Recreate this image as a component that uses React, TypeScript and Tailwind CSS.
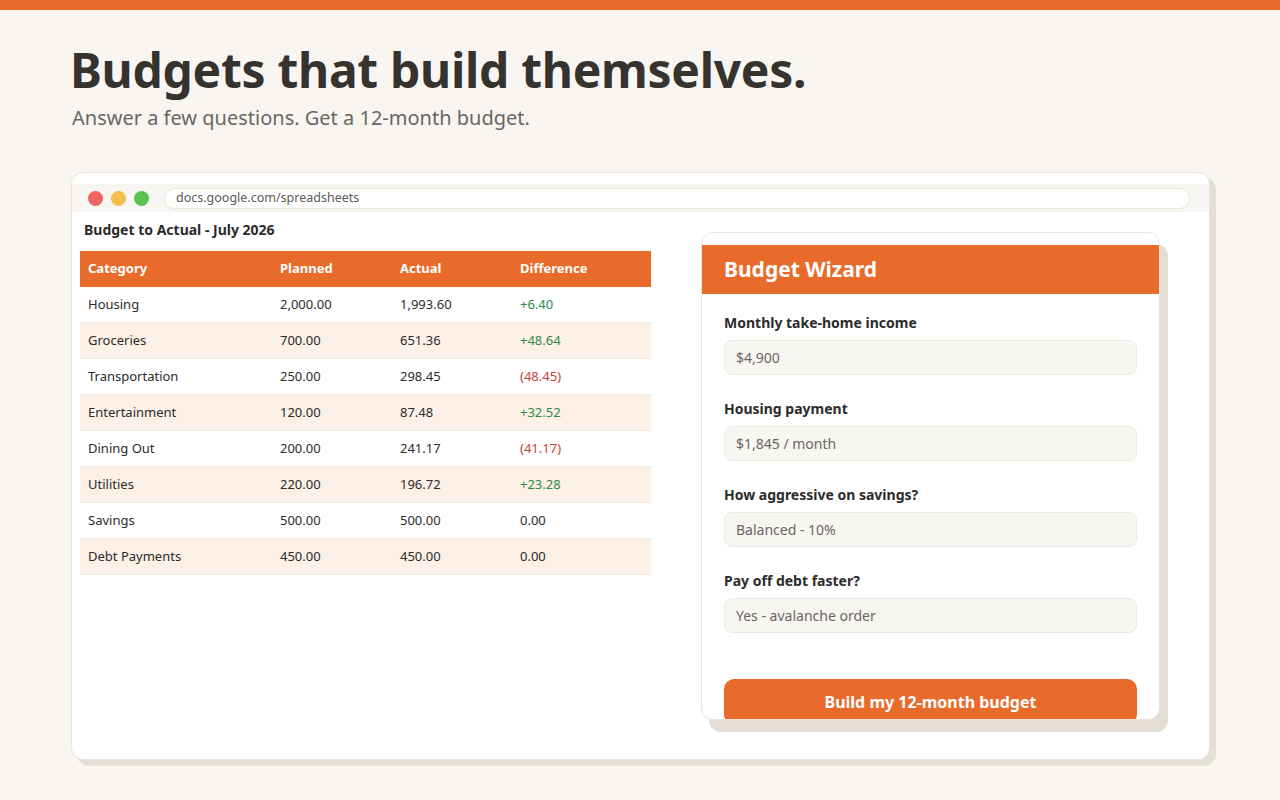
const rows = [
  ["Housing", "2,000.00", "1,993.60", "+6.40"],
  ["Groceries", "700.00", "651.36", "+48.64"],
  ["Transportation", "250.00", "298.45", "(48.45)"],
  ["Entertainment", "120.00", "87.48", "+32.52"],
  ["Dining Out", "200.00", "241.17", "(41.17)"],
  ["Utilities", "220.00", "196.72", "+23.28"],
  ["Savings", "500.00", "500.00", "0.00"],
  ["Debt Payments", "450.00", "450.00", "0.00"],
];

const fields = [
  ["Monthly take-home income", "$4,900"],
  ["Housing payment", "$1,845 / month"],
  ["How aggressive on savings?", "Balanced - 10%"],
  ["Pay off debt faster?", "Yes - avalanche order"],
];

function diffColor(d: string) {
  if (d.startsWith("+")) return "text-[#2f8a4a]";
  if (d.startsWith("(")) return "text-[#c6423a]";
  return "text-[#2b2b2b]";
}

export default function App() {
  return (
    <div className="min-h-[800px] bg-[#f9f6f1] font-['Liberation_Sans',Arial,sans-serif] text-[#2b2b2b]">
      <div className="h-[10px] bg-[#e96b2b]" />
      <div className="px-[70px] pt-[32px]">
        <h1 className="text-[48px] font-bold leading-[56px] text-[#36322e] tracking-[-0.3px]">Budgets that build themselves.</h1>
        <p className="ml-[2px] mt-[8px] text-[20px] leading-[24px] text-[#6b6660]">Answer a few questions. Get a 12-month budget.</p>

        <div className="mt-[42px] ml-[1px] w-[1139px] h-[588px] rounded-[12px] border border-[#ebe5da] bg-white shadow-[6px_6px_0_#e5dfd5] overflow-hidden">
          <div className="mt-[11px] h-[28px] bg-[#f8f6f2] flex items-center pl-[16px] pr-[19px] gap-[8px]">
            <span className="w-[15px] h-[15px] rounded-full bg-[#ee6460]" />
            <span className="w-[15px] h-[15px] rounded-full bg-[#f5bd4a]" />
            <span className="w-[15px] h-[15px] rounded-full bg-[#5bc251]" />
            <div className="ml-[7px] flex-1 h-[21px] rounded-full bg-white border border-[#ebe5da] flex items-center px-[11px] text-[12.5px] text-[#5d5955]">
              docs.google.com/spreadsheets
            </div>
          </div>
          <div className="flex pl-[8px]">
            <div className="w-[571px] pt-[10px]">
              <div className="pl-[4px] text-[14px] font-bold leading-[16px] text-[#2b2b2b]">Budget to Actual - July 2026</div>
              <div className="mt-[13px] text-[13px]">
                <div className="h-[36px] bg-[#e96b2b] text-white font-bold flex items-center">
                  <span className="w-[200px] pl-[8px]">Category</span>
                  <span className="w-[120px]">Planned</span>
                  <span className="w-[120px]">Actual</span>
                  <span>Difference</span>
                </div>
                {rows.map((r, i) => (
                  <div key={r[0]} className={`h-[36px] flex items-center border-b border-[#efe9e0] ${i % 2 ? "bg-[#fdf0e7]" : "bg-white"}`}>
                    <span className="w-[200px] pl-[8px]">{r[0]}</span>
                    <span className="w-[120px]">{r[1]}</span>
                    <span className="w-[120px]">{r[2]}</span>
                    <span className={diffColor(r[3])}>{r[3]}</span>
                  </div>
                ))}
              </div>
            </div>
            <div className="ml-[50px] mt-[20px] w-[459px] h-[488px] rounded-[12px] border border-[#ebe5da] bg-white shadow-[8px_12px_0_#e3ddd3] overflow-hidden">
              <div className="mt-[12px] h-[49px] bg-[#e96b2b] flex items-center px-[22px] text-[21px] font-bold text-white">Budget Wizard</div>
              <div className="px-[22px] pt-[21px]">
                {fields.map(([l, v]) => (
                  <div key={l} className="mb-[26px]">
                    <div className="text-[14px] font-bold leading-[16px] text-[#2b2b2b]">{l}</div>
                    <div className="mt-[9px] h-[35px] rounded-[8px] border border-[#eee9e0] bg-[#f8f6f2] flex items-center px-[11px] text-[14px] text-[#6b6660]">{v}</div>
                  </div>
                ))}
                <div className="mt-[46px] h-[45px] rounded-[10px] bg-[#e96b2b] flex items-center justify-center text-[16px] font-bold text-white">Build my 12-month budget</div>
              </div>
            </div>
          </div>
        </div>
      </div>
    </div>
  );
}
